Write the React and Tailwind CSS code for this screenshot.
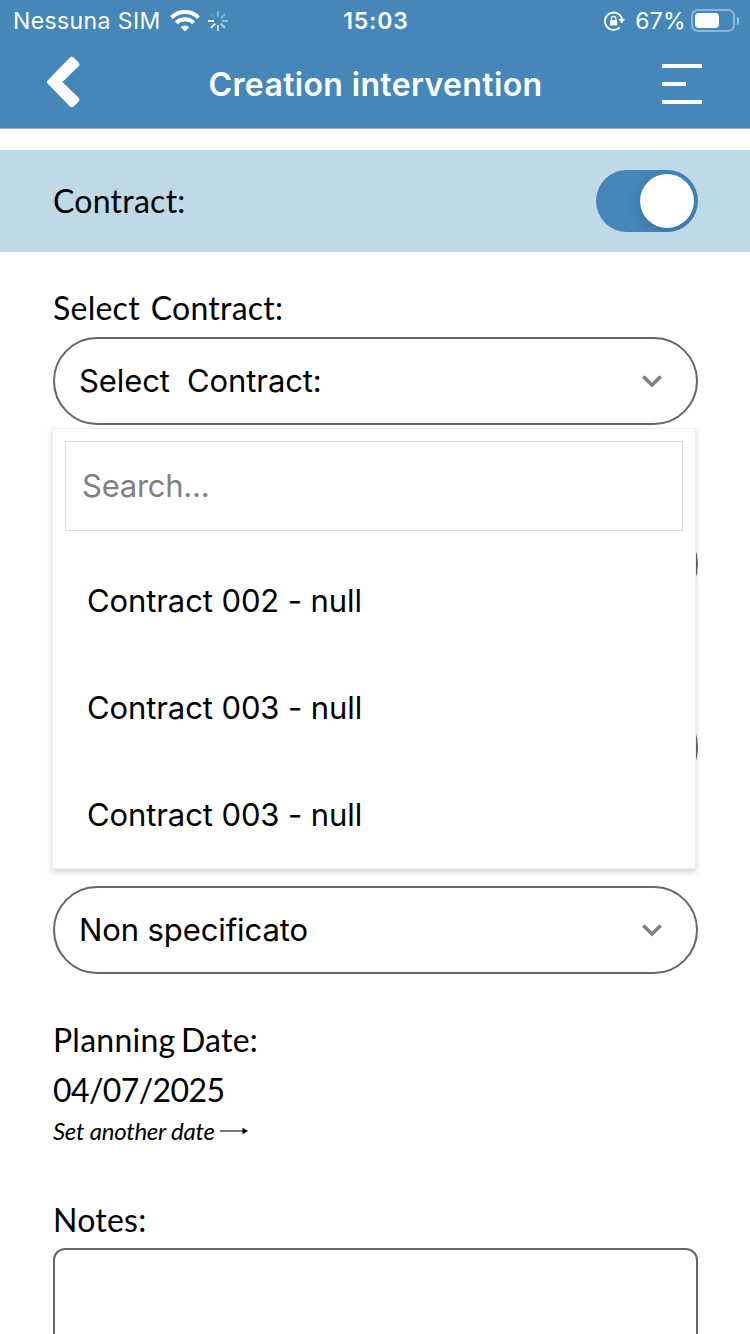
import { useState } from 'react';

const CONTRACTS = [
  { id: 1, name: 'Contract 002 - null' },
  { id: 2, name: 'Contract 003 - null' },
  { id: 3, name: 'Contract 003 - null' },
];

// Opacity of each spoke, clockwise from the top.
const SPOKES = [0.35, 0.4, 0.45, 0.55, 0.65, 0.85, 1, 0.15];

function WifiIcon() {
  return (
    <svg viewBox="0 0 30 22" className="w-[30px] h-[22px] shrink-0" fill="none" stroke="white" strokeWidth="4">
      <path d="M1.4 7.6a19.2 19.2 0 0 1 27.2 0" />
      <path d="M6.3 12.9a12.3 12.3 0 0 1 17.4 0" />
      <path d="M15 21.5l-4.2-4.2a6 6 0 0 1 8.4 0z" fill="white" stroke="none" />
    </svg>
  );
}

function Spinner() {
  return (
    <svg viewBox="0 0 20 20" className="w-5 h-5 shrink-0" stroke="white" strokeWidth="2">
      {SPOKES.map((opacity, i) => (
        <path key={i} d="M10 0v6" opacity={opacity} transform={`rotate(${i * 45} 10 10)`} />
      ))}
    </svg>
  );
}

function RotationLockIcon() {
  return (
    <svg viewBox="0 0 22 20" className="w-[22px] h-5 shrink-0" fill="none" stroke="white">
      <path d="M15.8 16.4A8.7 8.7 0 1 1 18.2 8.6" strokeWidth="1.8" />
      <path d="M14.6 8h6.4l-3.2 4.4z" fill="white" stroke="none" />
      <rect x="6" y="9" width="7.2" height="5.6" rx="0.8" fill="white" stroke="none" />
      <path d="M7.4 9.5V7.6a2.2 2.2 0 0 1 4.4 0v1.9" strokeWidth="1.3" />
    </svg>
  );
}

function StatusBar() {
  return (
    <div className="grid grid-cols-3 items-center h-10 pl-[13px] pr-[11px] text-[23px] leading-[42px]">
      <div className="flex items-center whitespace-nowrap">
        <span className="tracking-[0.4px] mr-[9px]">Nessuna SIM</span>
        <WifiIcon />
        <span className="ml-2 flex">
          <Spinner />
        </span>
      </div>
      <span className="text-center font-semibold tracking-[0.8px]">15:03</span>
      <div className="flex items-center justify-end">
        <RotationLockIcon />
        <span className="ml-[9px] mr-[5px] tracking-[0.3px]">67%</span>
        <div className="w-11 h-[23px] -mt-px rounded-[7px] border-2 border-white/40 p-[2px]">
          <div className="w-6 h-[15px] rounded-[4px] bg-white" />
        </div>
        <div className="w-[2px] h-2 ml-[2px] rounded-r-full bg-white/50" />
      </div>
    </div>
  );
}

function Header() {
  return (
    <header className="h-[129px] bg-[#4587b9] border-b border-[#a3a9ad] text-white">
      <StatusBar />
      <div className="flex items-center justify-between h-[88px] pl-[46px] pr-12">
        <button type="button" aria-label="Back" className="-mt-1">
          <svg viewBox="0 0 34 52" className="w-[34px] h-[52px]" fill="white">
            <path d="M24 1.6q1.8-1.6 3.6 0l5 5q1.6 1.8 0 3.6L16.4 26l16.2 15.8q1.6 1.8 0 3.6l-5 5q-1.8 1.6-3.6 0L1.6 27.6q-1.4-1.6 0-3.2z" />
          </svg>
        </button>
        <h1 className="pt-[2px] pl-[9px] text-[32px] font-semibold tracking-[0.35px]">Creation intervention</h1>
        <button type="button" aria-label="Menu" className="flex flex-col gap-[14px]">
          <span className="w-10 h-1 bg-white" />
          <span className="w-6 h-1 bg-white" />
          <span className="w-10 h-1 bg-white" />
        </button>
      </div>
    </header>
  );
}

function Toggle({ on, onChange }) {
  return (
    <button
      type="button"
      role="switch"
      aria-label="Contract"
      aria-checked={on}
      onClick={() => onChange(!on)}
      className={`flex w-[102px] h-[62px] rounded-full p-1 overflow-hidden ${
        on ? 'justify-end bg-[#4587b9]' : 'justify-start bg-gray-300'
      }`}
    >
      <span className="w-[54px] h-[54px] rounded-full bg-white shadow-[0_4px_16px_rgba(0,0,0,0.16)]" />
    </button>
  );
}

function Label({ children }) {
  return (
    <span className="block leading-[44px] text-[32px] whitespace-pre tracking-[0.25px] [word-spacing:-3px] font-[Lato,sans-serif]">
      {children}
    </span>
  );
}

function SelectField({ label, value, children }) {
  return (
    <div className="relative h-[183px]">
      <div className="h-[51px]">
        <Label>{label}</Label>
      </div>
      <button
        type="button"
        className="flex items-center justify-between w-full h-[88px] pl-6 pr-[34px] rounded-full border-2 border-[#666] text-left"
      >
        <span className="whitespace-pre pt-px">{value}</span>
        <svg viewBox="0 0 20 13" className="w-5 h-[13px]" fill="none" stroke="#808080" strokeWidth="3.5">
          <path d="M1.3 1.5l8.7 8.5L18.7 1.5" />
        </svg>
      </button>
      {children}
    </div>
  );
}

function Dropdown() {
  return (
    <div className="absolute z-10 -left-px top-[142px] w-[644px] h-[441px] bg-white border border-[#eee] shadow-[0_3px_6px_rgba(0,0,0,0.18)]">
      <input
        type="text"
        placeholder="Search..."
        className="block w-[618px] h-[90px] mt-3 ml-3 pl-4 pb-[2px] tracking-[-0.25px] border border-[#ddd] placeholder:text-[#808080] outline-none"
      />
      <ul className="mt-[17px]">
        {CONTRACTS.map((c) => (
          <li key={c.id} className="h-[107px] pl-[34px] flex items-center">
            {c.name}
          </li>
        ))}
      </ul>
    </div>
  );
}

export default function App() {
  const [hasContract, setHasContract] = useState(true);

  return (
    <div className="w-[750px] h-[1334px] overflow-hidden bg-white text-black text-[31px] font-[Inter,sans-serif]">
      <Header />
      <section className="flex items-center justify-between h-[102px] mt-[21px] pl-[53px] pr-[52px] bg-[#c0d9e7]">
        <Label>Contract:</Label>
        <Toggle on={hasContract} onChange={setHasContract} />
      </section>

      <main className="pl-[53px] pr-[52px] pt-[34px] tracking-[-0.1px]">
        <SelectField label="Select  Contract:" value="Select  Contract:">
          <Dropdown />
        </SelectField>
        <SelectField label="Select client:" value="Non specificato" />
        <SelectField label="Select site:" value="Non specificato" />
        <SelectField label="Scheda associata intervento:" value="Non specificato" />

        <section className="h-[181px] font-[Lato,sans-serif]">
          <div className="h-12">
            <Label>Planning Date:</Label>
          </div>
          <p className="h-[47px] leading-[47px] text-[32px] tracking-[-0.6px]">04/07/2025</p>
          <button
            type="button"
            className="flex items-center gap-[5px] h-9 text-2xl italic tracking-[-0.25px]"
          >
            Set another date
            <svg viewBox="0 0 28 8" className="w-7 h-2">
              <path d="M0 4h25" stroke="#333" strokeWidth="1.3" />
              <path d="M22.5 0.8L28 4l-5.5 3.2z" fill="black" />
            </svg>
          </button>
        </section>

        <label className="block">
          <div className="h-[49px] -mt-px mb-px">
            <Label>Notes:</Label>
          </div>
          <textarea className="block w-full h-[200px] rounded-xl border-2 border-[#666] resize-none outline-none" />
        </label>
      </main>
    </div>
  );
}
